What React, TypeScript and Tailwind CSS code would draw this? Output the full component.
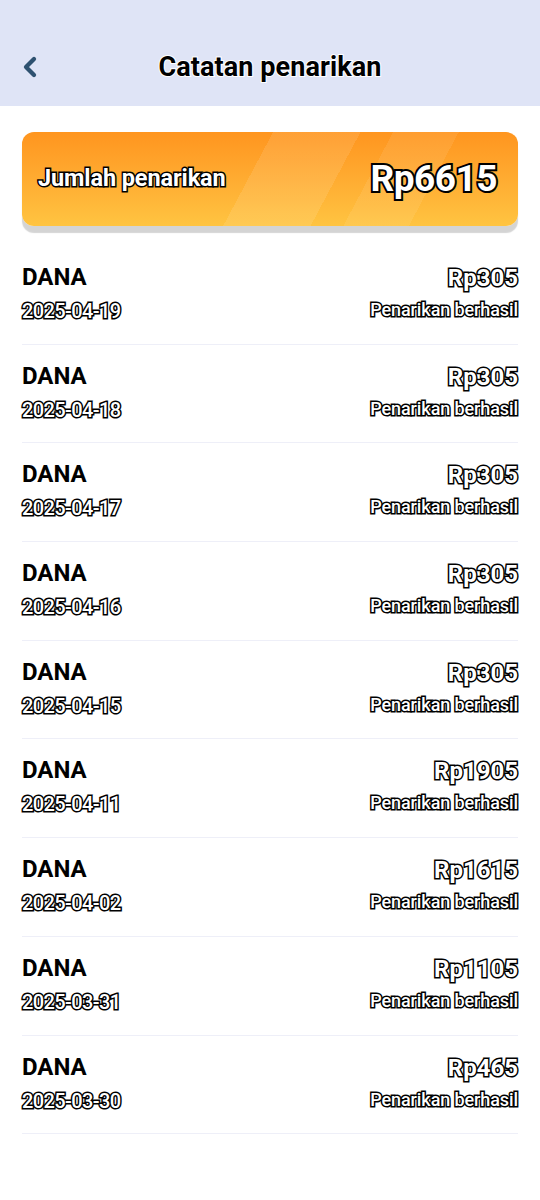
import { ChevronLeft } from "lucide-react";

const rows = [
  { date: "2025-04-19", amount: "Rp305" },
  { date: "2025-04-18", amount: "Rp305" },
  { date: "2025-04-17", amount: "Rp305" },
  { date: "2025-04-16", amount: "Rp305" },
  { date: "2025-04-15", amount: "Rp305" },
  { date: "2025-04-11", amount: "Rp1905" },
  { date: "2025-04-02", amount: "Rp1615" },
  { date: "2025-03-31", amount: "Rp1105" },
  { date: "2025-03-30", amount: "Rp465" },
];

// white fill, black outline drawn behind the fill
const outline = "text-white [-webkit-text-stroke:3px_#000] [paint-order:stroke_fill]";
const outlineThick = "text-white [-webkit-text-stroke:4px_#000] [paint-order:stroke_fill]";

export default function App() {
  return (
    <div className="min-h-[1200px] w-[540px] bg-white font-['Roboto',sans-serif]">
      <header className="flex h-[106px] items-center bg-[#dfe4f6] pt-[28px]">
        <div className="flex w-full items-center px-[14px]">
          <ChevronLeft className="h-[32px] w-[32px] text-[#2e5170]" strokeWidth={3.2} />
          <h1 className="flex-1 pr-[32px] text-center text-[27px] font-bold tracking-[0.1px] text-black [-webkit-text-stroke:2px_#fff] [paint-order:stroke_fill]">
            Catatan penarikan
          </h1>
        </div>
      </header>

      <div className="px-[22px] pt-[26px]">
        <div className="relative flex h-[94px] items-center justify-between overflow-hidden rounded-[12px] bg-[linear-gradient(180deg,#ff951f_0%,#ffae33_55%,#ffc441_100%)] px-[16px] shadow-[0_7px_1px_rgba(0,0,0,0.17)]">
          <div className="absolute inset-0 bg-[linear-gradient(118deg,transparent_0%,transparent_46%,rgba(255,255,255,0.1)_46%,rgba(255,255,255,0.1)_62%,transparent_62%,transparent_68%,rgba(255,255,255,0.08)_68%,rgba(255,255,255,0.08)_80%,transparent_80%)]" />
          <span className={`relative text-[23.5px] font-bold tracking-[-0.1px] ${outline}`}>
            Jumlah penarikan
          </span>
          <span className={`relative pr-[5px] text-[37px] font-bold tracking-[-0.5px] ${outlineThick}`}>
            Rp6615
          </span>
        </div>
      </div>

      <div className="px-[22px] pt-[20px]">
        {rows.map((row) => (
          <div
            key={row.date}
            className="flex items-start justify-between border-b border-[#eeeff8] pb-[20.7px] pt-[19px]"
          >
            <div className="flex flex-col gap-[10px]">
              <span className="h-[24px] text-[24px] font-bold leading-[24px] text-black">DANA</span>
              <span className={`h-[24px] text-[20px] font-medium leading-[24px] tracking-[-0.6px] ${outline}`}>
                {row.date}
              </span>
            </div>
            <div className="flex flex-col items-end gap-[8px]">
              <span className={`h-[26px] text-[24px] font-bold leading-[26px] ${outline}`}>
                {row.amount}
              </span>
              <span className={`h-[22px] text-[18px] font-medium leading-[22px] tracking-[-0.1px] ${outline}`}>
                Penarikan berhasil
              </span>
            </div>
          </div>
        ))}
      </div>
    </div>
  );
}
